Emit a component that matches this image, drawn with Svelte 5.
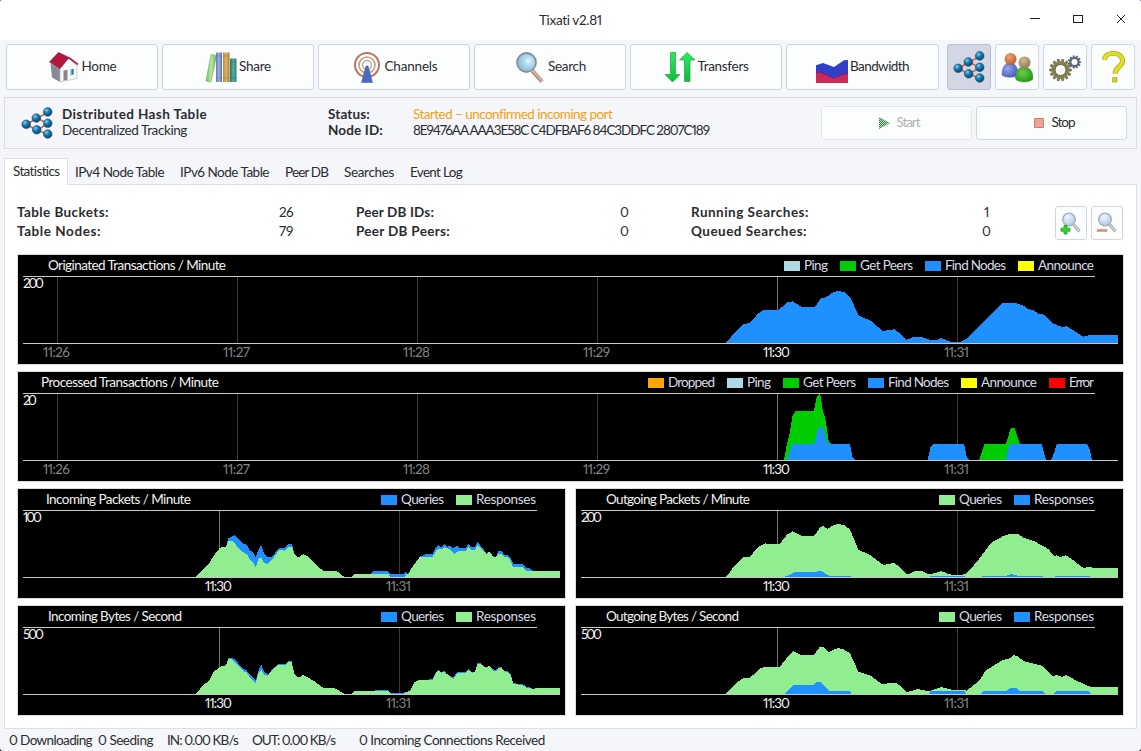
<script>
  // Spreads the letters of a label over a given width.
  function fit(node, width) {
    const natural = node.getBoundingClientRect().width;
    node.style.letterSpacing = (width - natural) / node.textContent.length + 'px';
    node.style.width = width + 'px';
  }

  const tools = [
    { icon: 'home', label: 'Home', w: 35 },
    { icon: 'share', label: 'Share', w: 32 },
    { icon: 'channels', label: 'Channels', w: 53 },
    { icon: 'search', label: 'Search', w: 38 },
    { icon: 'transfers', label: 'Transfers', w: 51 },
    { icon: 'bandwidth', label: 'Bandwidth', w: 59 }
  ];
  const smallTools = ['dht', 'users', 'gears', 'help'];
  const tabs = [['Statistics', 47], ['IPv4 Node Table', 89], ['IPv6 Node Table', 89], ['Peer DB', 43], ['Searches', 50], ['Event Log', 52]];
  const stats = [
    [['Table Buckets:', 92, '26', 14], ['Table Nodes:', 84, '79', 14]],
    [['Peer DB IDs:', 78, '0', 8], ['Peer DB Peers:', 94, '0', 8]],
    [['Running Searches:', 118, '1', 6], ['Queued Searches:', 116, '0', 8]]
  ];
  const status = [['0 Downloading', 83], ['0 Seeding', 55], ['IN: 0.00 KB/s', 71], ['OUT: 0.00 KB/s', 83], ['0 Incoming Connections Received', 186]];

  const BLUE = '#1e90ff', GREEN = '#00cd00', PALE = '#90ee90', LIGHT = '#add8e6', YELLOW = '#ffff00', ORANGE = '#ffa500', RED = '#ff0000';
  const queries = (a, b) => [['Queries', a, 363, 43], ['Responses', b, 438, 60]];

  // Series are flat x,y lists at three units per pixel; dx, dy move them into the chart.
  const charts = [
    {
      title: 'Originated Transactions / Minute', tx: 30, tw: 178, max: '200', mw: 21, width: 1105,
      legend: [['Ping', LIGHT, 766, 24], ['Get Peers', GREEN, 822, 53], ['Find Nodes', BLUE, 907, 61], ['Announce', YELLOW, 1000, 56]],
      ticks: [['11:26', 39], ['11:27', 219], ['11:28', 399], ['11:29', 579], ['11:30', 759], ['11:31', 939]],
      dx: 2046, dy: -195,
      series: [[BLUE, [77,458,85,452,100,432,130,402,150,399,175,370,192,359,235,359,245,352,260,338,278,334,303,350,345,350,363,324,378,322,400,306,415,303,435,307,452,323,475,376,513,393,548,423,583,418,597,428,618,450,640,441,665,441,690,450,710,450,722,444,740,451,755,456,780,456,800,446,830,418,908,340,945,339,973,348,985,358,1000,360,1015,371,1033,374,1058,400,1090,412,1097,407,1115,418,1150,440,1170,435,1254,435]]]
    },
    {
      title: 'Processed Transactions / Minute', tx: 23, tw: 178, max: '20', mw: 14, width: 1105,
      legend: [['Dropped', ORANGE, 630, 47], ['Ping', LIGHT, 709, 24], ['Get Peers', GREEN, 765, 53], ['Find Nodes', BLUE, 850, 61], ['Announce', YELLOW, 943, 56], ['Error', RED, 1031, 25]],
      ticks: [['11:26', 39], ['11:27', 219], ['11:28', 399], ['11:29', 579], ['11:30', 759], ['11:31', 939]],
      dx: 1806, dy: -21,
      series: [
        [GREEN, [492,285,500,240,508,210,517,155,526,138,582,138,590,98,600,83,608,135,618,170,625,225,633,236,650,285,1077,285,1093,237,1158,237,1172,190,1183,188,1200,237,1210,285]],
        [BLUE, [502,285,515,238,582,237,592,195,600,185,610,187,618,218,625,237,690,237,697,275,705,285,923,285,932,245,940,237,1032,237,1040,275,1047,285,1158,285,1164,250,1172,237,1265,237,1275,275,1280,285,1293,285,1302,265,1310,237,1400,237,1410,255,1416,285]]
      ]
    },
    {
      title: 'Incoming Packets / Minute', tx: 28, tw: 145, max: '100', mw: 19, width: 547,
      legend: queries(BLUE, PALE), ticks: [['11:30', 201], ['11:31', 381]], dx: -54, dy: -27,
      series: [
        [BLUE, [678,200,685,175,705,165,715,177,730,191,738,192,750,211,758,215,767,231,777,205,783,195,793,222,803,231,815,231,838,203,855,204,865,193,877,192,880,222,900,240,910,291,1110,291,1115,278,1122,273,1163,273,1172,282,1210,282,1217,276,1222,282,1235,270,1260,230,1278,222,1298,222,1308,202,1315,196,1323,201,1333,192,1343,200,1352,197,1360,206,1370,196,1380,204,1397,203,1405,192,1415,202,1425,202,1433,186,1442,198,1455,214,1460,222,1488,231,1495,213,1505,213,1512,224,1522,224,1532,236,1540,252,1568,252,1580,263,1590,265,1600,273]],
        [PALE, [588,291,600,278,630,246,640,228,660,203,678,200,685,184,695,182,705,191,715,205,735,221,742,224,750,240,758,245,767,261,775,238,783,232,793,250,805,251,815,240,838,210,855,212,865,202,877,202,883,222,893,231,900,230,910,222,925,230,955,262,972,273,1010,273,1033,291,1055,291,1063,282,1165,282,1172,291,1213,291,1220,282,1226,281,1235,263,1260,230,1298,230,1310,210,1318,206,1325,208,1333,202,1350,208,1363,221,1378,212,1397,212,1405,202,1415,211,1425,211,1433,195,1448,211,1460,221,1468,214,1480,231,1488,231,1495,222,1505,223,1515,232,1525,232,1530,240,1540,262,1568,261,1580,273,1680,273]]
      ]
    },
    {
      title: 'Outgoing Packets / Minute', tx: 30, tw: 144, max: '200', mw: 21, width: 547,
      legend: queries(PALE, BLUE), ticks: [['11:30', 201], ['11:31', 381]], dx: 342, dy: -27,
      series: [
        [PALE, [105,291,112,287,130,262,160,232,180,230,205,200,225,190,232,192,270,191,290,165,308,154,333,167,373,167,390,143,400,138,413,147,430,135,445,132,465,136,480,149,505,209,540,225,580,255,612,249,628,260,650,282,660,281,675,273,695,273,715,282,735,280,753,273,770,280,790,286,810,286,830,280,860,246,905,187,938,169,955,163,985,162,1000,173,1035,185,1075,207,1093,229,1100,226,1110,231,1128,226,1145,237,1180,264,1198,260,1210,264,1284,264]],
        [BLUE, [285,290,315,276,375,276,385,273,393,273,418,287,483,288,484,292,719,292,720,288,825,288,826,292,875,292,876,288,948,288,965,282,985,288,1058,288,1059,292,1095,292,1096,288,1200,288,1201,292]]
      ]
    },
    {
      title: 'Incoming Bytes / Second', tx: 30, tw: 134, max: '500', mw: 21, width: 547,
      legend: queries(BLUE, PALE), ticks: [['11:30', 201], ['11:31', 381]], dx: -54, dy: -378,
      series: [
        [BLUE, [683,556,685,534,697,534,706,539,720,556,730,568,738,569,750,585,758,590,767,602,777,567,784,555,793,577,805,583,815,570,835,552,857,551,866,544,875,542,880,575,883,590,890,642,1122,642,1125,630,1163,630,1172,639,1210,639,1215,633,1222,640,1278,600,1298,597,1308,577,1316,570,1323,576,1333,573,1345,587,1355,590,1362,590,1370,577,1397,575,1405,566,1415,576,1425,576,1433,548,1442,550,1455,562,1468,558,1485,572,1497,562,1505,562,1512,573,1522,572,1532,583,1540,610,1568,612,1580,621,1590,622,1600,629]],
        [PALE, [588,642,610,615,628,602,640,577,660,560,678,556,685,538,697,538,710,554,732,575,740,577,750,593,767,610,775,580,784,570,793,585,803,587,815,572,833,556,857,554,866,546,875,545,883,583,893,592,900,591,910,585,920,590,945,605,970,624,1005,625,1033,642,1055,642,1065,633,1165,633,1172,641,1210,641,1230,632,1242,608,1257,600,1298,600,1310,575,1318,572,1325,578,1333,575,1350,590,1360,597,1370,581,1397,578,1405,570,1418,578,1425,576,1433,550,1442,552,1460,565,1468,556,1480,572,1490,572,1497,563,1505,565,1515,575,1523,575,1532,587,1540,612,1568,615,1580,623,1600,627,1610,624,1680,624]]
      ]
    },
    {
      title: 'Outgoing Bytes / Second', tx: 30, tw: 133, max: '500', mw: 21, width: 547,
      legend: queries(PALE, BLUE), ticks: [['11:30', 201], ['11:31', 381]], dx: 342, dy: -378,
      series: [
        [PALE, [108,642,140,608,160,594,180,593,210,566,228,559,232,561,270,560,290,534,310,514,333,525,372,525,388,502,400,502,415,516,443,504,460,508,480,520,505,575,540,586,575,612,615,608,628,615,650,636,685,627,715,634,753,621,790,630,825,630,830,632,870,600,885,573,938,540,960,535,970,525,982,528,1000,543,1055,557,1088,590,1100,584,1115,591,1128,585,1160,602,1195,618,1205,621,1284,621]],
        [BLUE, [283,642,310,615,372,615,380,606,390,606,418,633,480,634,485,642,717,642,722,633,823,633,828,642,873,642,880,633,948,633,962,624,980,624,988,633,1058,633,1065,642,1092,642,1098,633,1197,633,1203,642]]
      ]
    }
  ];

  // One-pixel columns interpolated between samples, closed on the baseline.
  function area(pts, dx, dy) {
    const p = [];
    for (let i = 0; i < pts.length; i += 2) p.push([(pts[i] + dx) / 3, (pts[i + 1] + dy) / 3]);
    const x0 = Math.round(p[0][0]), x1 = Math.round(p[p.length - 1][0]);
    let d = `M${x0} 88`, k = 0;
    for (let x = x0; x < x1; x++) {
      const c = x + 0.5;
      while (k < p.length - 2 && p[k + 1][0] < c) k++;
      const t = Math.max(0, Math.min(1, (c - p[k][0]) / (p[k + 1][0] - p[k][0])));
      d += `V${Math.min(88, Math.round(p[k][1] + t * (p[k + 1][1] - p[k][1])))}h1`;
    }
    return d + 'V88Z';
  }

  function gear(cx, cy, r, n) {
    let d = '';
    for (let i = 0; i < n; i++) {
      [[-0.36, r * 0.76], [-0.2, r], [0.2, r], [0.36, r * 0.76]].forEach(([o, q], j) => {
        const a = ((i + o) / n) * Math.PI * 2;
        d += `${i || j ? 'L' : 'M'}${(cx + q * Math.cos(a)).toFixed(2)} ${(cy + q * Math.sin(a)).toFixed(2)}`;
      });
    }
    return d + 'Z';
  }
  const nodes = [[5.2, 17.3], [15.3, 11], [26.7, 4.9], [26.7, 16.3], [15.7, 22.8], [26.7, 27]];
</script>

<svelte:head><title>Tixati v2.81</title></svelte:head>

{#snippet icon(name)}
  <svg class="ico" width="32" height="32" viewBox="0 0 32 32">
    {#if name === 'home'}
      <path d="M2.500 12.500 12 17.500V31l-8-4.500z" fill="#858c96" />
      <path d="M12 17 21 7l8 8v12.500L12 31z" fill="#f8f8fa" stroke="#b4b7bd" stroke-width=".6" />
      <path d="M1.500 11 10.500 1.500 21 6.500 12 17.500z" fill="#b01840" stroke="#8c1435" stroke-width=".7" />
      <path d="m20.500 6.500 9.500 7" stroke="#ad2449" stroke-width="1.700" />
      <path d="m15.500 19.500 4-.8v10l-4 1z" fill="#8d8587" />
      <path d="m22.500 18.500 3.200-.7v5.700l-3.200.7z" fill="#287fa5" /><path d="M23 18.400v5.700" stroke="#b6dcec" />
    {:else if name === 'share'}
      <path d="m6 3.500 5.500 1L6 31l-5-1z" fill="url(#bookG)" stroke="#68a95a" stroke-width=".6" />
      <path d="M11 1.500h6V31h-6z" fill="url(#bookB)" /><path d="M11 5h6M11 27h6" stroke="#5670b2" stroke-opacity=".5" />
      <path d="M18 1.500h6.500V31H18z" fill="url(#bookO)" /><path d="M18 5h6M18 27h6" stroke="#9d7220" stroke-opacity=".5" />
      <path d="M25 7.500h6.500V31H25z" fill="url(#bookT)" /><path d="M25 11h6M25 27h6" stroke="#1d776d" stroke-opacity=".5" />
    {:else if name === 'channels'}
      <g fill="none"><circle cx="16" cy="14" r="12" stroke="#bd755b" stroke-width="2" /><circle cx="16" cy="14" r="8" stroke="#bca289" stroke-width="1.600" /><circle cx="16" cy="14" r="4.500" stroke="#b9b091" stroke-width="1.500" /></g>
      <path d="M15 15h2l4.500 16.500h-11z" fill="#476bc5" stroke="#3853a2" stroke-width=".5" />
    {:else if name === 'search'}
      <path d="m18.500 20 9.500 10.500" stroke="#968078" stroke-width="4" /><path d="m18.500 19.500 9.500 10.500" stroke="#dbae98" stroke-width="2.400" />
      <circle cx="12.500" cy="11.500" r="9.500" fill="url(#lens)" stroke="#899198" stroke-width="1.800" />
    {:else if name === 'transfers'}
      <path d="M6.500 1.500h5v22H16l-7.500 7.500L1 23.500h5.500z" fill="url(#arrow)" stroke="#3c9f52" stroke-width=".8" />
      <path d="M20.500 30.500h5.500V9h5l-8-7.500L15.500 9h5z" fill="url(#arrow)" stroke="#3c9f52" stroke-width=".8" />
    {:else if name === 'bandwidth'}
      <path d="m0 14.300 7-2.300 11 4L28 9.300l4-.3v18H0z" fill="#303fc5" /><path d="m0 22 4-.7 14 6L28 23h4v9H0z" fill="#cc2958" /><path d="m0 22 4-.7 14 6L28 23h4" stroke="#822078" fill="none" />
    {:else if name === 'dht'}
      <path d="m5 17.500 21.500-12M5 17.500 16 23l11 4.500M15.500 11 27 16.500 16 23" stroke="#dc6341" stroke-width="1.500" fill="none" />
      {#each nodes as [x, y]}<circle cx={x} cy={y} r="4.300" fill="url(#ball)" stroke="#20465e" stroke-width=".6" />{/each}
    {:else if name === 'users'}
      <path d="M1 24c0-8 3-12 8-12s8 4 8 12c-3 3-13 3-16 0z" fill="url(#bodyB)" stroke="#4b58a5" stroke-width=".5" /><circle cx="9.500" cy="8" r="6" fill="url(#headO)" />
      <path d="M14.500 28c0-8 3-12 8.500-12s9 4 9 12c-4 4-14 4-17.500 0z" fill="url(#bodyG)" stroke="#328923" stroke-width=".5" /><circle cx="23.500" cy="11.500" r="6" fill="url(#headT)" />
    {:else if name === 'gears'}
      <path d={gear(11.500, 19, 11, 14)} fill="#858150" stroke="#5d5b3d" stroke-width=".5" /><circle cx="11.500" cy="19" r="5.500" fill="#fbfdfd" stroke="#656243" />
      <path d={gear(25.500, 11, 6.800, 11)} fill="#596678" /><circle cx="25.500" cy="11" r="3" fill="#fbfdfd" />
    {:else if name === 'help'}
      <path d="M7.500 9c.5-9 18-9 18 1 0 6-7 5.500-7.500 12.500" fill="none" stroke="#a4a41c" stroke-width="5" /><path d="M7.500 9c.5-9 18-9 18 1 0 6-7 5.500-7.500 12.500" fill="none" stroke="#dfe021" stroke-width="3.600" />
      <path d="M15.500 26.500h4.500V31h-4.500z" fill="#d3d51c" stroke="#a4a41c" stroke-width=".7" />
    {/if}
  </svg>
{/snippet}

{#snippet zoomIcon(plus)}
  <svg width="24" height="24" viewBox="0 0 24 24">
    <path d="m14.500 13.500 6 7" stroke="#9b9b9e" stroke-width="3" /><path d="m14.500 13.500 6 7" stroke="#d7d8da" stroke-width="1.500" />
    <circle cx="10" cy="8.500" r="6.300" fill="url(#lensPale)" stroke="#a7abb0" stroke-width="1.300" />
    {#if plus}<path d="M5 14.500h3v2.700h3v3H8V23H5v-2.800H2v-3h3z" fill="#35d62d" stroke="#249b25" stroke-width=".8" />
    {:else}<path d="M2 18.500h10v2H2z" fill="#dc8c7d" stroke="#c7897f" stroke-width=".5" />{/if}
  </svg>
{/snippet}

{#snippet chart(c)}
  <svg class="chart" width={c.width} height="109" viewBox="0 0 {c.width} 109">
    <g shape-rendering="crispEdges">
      {#each c.ticks as [label, x]}<path d="M{x}.5 22V88" stroke={label === '11:30' ? '#777' : '#3b3b3b'} />{/each}
      {#each c.series as [fill, pts]}<path d={area(pts, c.dx, c.dy)} {fill} />{/each}
      <path d="M5 21.500H{c.width - 28}M5 88.500H{c.width - 5}" stroke="#c8c8c8" />
      {#each c.legend as [, fill, x]}<rect {x} y="6" width="16" height="10" {fill} />{/each}
    </g>
    <text x={c.tx} y="15" textLength={c.tw}>{c.title}</text>
    <text x="5" y="33" textLength={c.mw}>{c.max}</text>
    {#each c.legend as [label, , x, w]}<text class="key" x={x + 20} y="15" textLength={w}>{label}</text>{/each}
    {#each c.ticks as [label, x]}<text class:dim={label !== '11:30'} x={label === '11:31' ? x - 13 : x - 14} y="102" textLength={label === '11:31' ? 25 : 27}>{label}</text>{/each}
  </svg>
{/snippet}

<svg class="defs" width="0" height="0">
  <defs>
    <radialGradient id="ball" cx=".35" cy=".3" r=".75"><stop offset="0" stop-color="#83d4f3" /><stop offset=".4" stop-color="#1681b9" /><stop offset="1" stop-color="#073e63" /></radialGradient>
    <radialGradient id="lens" cx=".6" cy=".42" r=".6"><stop offset="0" stop-color="#e5f7ff" /><stop offset=".35" stop-color="#b5dcf1" /><stop offset="1" stop-color="#86b9d8" /></radialGradient>
    <radialGradient id="lensPale" cx=".4" cy=".3" r=".75"><stop offset="0" stop-color="#edf6ff" /><stop offset="1" stop-color="#a8c6eb" /></radialGradient>
    <radialGradient id="headO" cx=".4" cy=".3" r=".7"><stop offset="0" stop-color="#eba376" /><stop offset="1" stop-color="#b96031" /></radialGradient>
    <radialGradient id="headT" cx=".4" cy=".3" r=".7"><stop offset="0" stop-color="#cebb91" /><stop offset="1" stop-color="#927d57" /></radialGradient>
    <radialGradient id="bodyB" cx=".35" cy=".4" r=".7"><stop offset="0" stop-color="#98a6ef" /><stop offset="1" stop-color="#4258bf" /></radialGradient>
    <radialGradient id="bodyG" cx=".4" cy=".4" r=".7"><stop offset="0" stop-color="#6ccc4d" /><stop offset="1" stop-color="#1e9710" /></radialGradient>
    <linearGradient id="arrow" x2="0" y2="1"><stop stop-color="#29ed64" /><stop offset="1" stop-color="#0bbd36" /></linearGradient>
    <linearGradient id="bookG"><stop stop-color="#77bf63" /><stop offset=".5" stop-color="#b5eaa2" /><stop offset="1" stop-color="#69ad57" /></linearGradient>
    <linearGradient id="bookB"><stop stop-color="#6178b8" /><stop offset=".5" stop-color="#a3b2df" /><stop offset="1" stop-color="#536ba9" /></linearGradient>
    <linearGradient id="bookO"><stop stop-color="#b48632" /><stop offset=".5" stop-color="#dfb86c" /><stop offset="1" stop-color="#a87820" /></linearGradient>
    <linearGradient id="bookT"><stop stop-color="#216e67" /><stop offset=".5" stop-color="#63aaa0" /><stop offset="1" stop-color="#287d72" /></linearGradient>
    <pattern id="check" width="2" height="2" patternUnits="userSpaceOnUse"><rect width="2" height="2" fill="#c9dfca" /><path d="M0 0h1v1H0zM1 1h1v1H1z" fill="#32823a" /></pattern>
  </defs>
</svg>

<div class="window">
  <header>
    <span class="t" use:fit={63}>Tixati v2.81</span>
    <svg class="controls" width="100" height="12" viewBox="0 0 100 12" fill="none" stroke="#202020">
      <path d="M2 4.500h10" shape-rendering="crispEdges" /><path d="M45.500 1.500h9v7h-9z" shape-rendering="crispEdges" /><path d="m89 1 8 8m0-8-8 8" />
    </svg>
  </header>

  <nav>
    {#each tools as t}
      <button class="tool">{@render icon(t.icon)}<span class="t" use:fit={t.w}>{t.label}</span></button>
    {/each}
    <div class="small-tools">
      {#each smallTools as s}<button class:active={s === 'dht'}>{@render icon(s)}</button>{/each}
    </div>
  </nav>

  <section class="info">
    {@render icon('dht')}
    <div class="lines name"><b class="t" use:fit={145}>Distributed Hash Table</b><span class="t" use:fit={125}>Decentralized Tracking</span></div>
    <div class="lines keys"><b class="t" use:fit={42}>Status:</b><b class="t" use:fit={55}>Node ID:</b></div>
    <div class="lines values"><span class="t warn" use:fit={199}>Started – unconfirmed incoming port</span><span class="t" use:fit={296}>8E9476AA AAA3E58C C4DFBAF6 84C3DDFC 2807C189</span></div>
    <div class="actions">
      <button class="off"><svg width="16" height="16"><path d="M3 2v12l11-6z" fill="url(#check)" /></svg><span class="t" use:fit={23}>Start</span></button>
      <button><svg width="16" height="16"><path d="M3.500 3.500h9v9h-9z" fill="#eda496" stroke="#c77d72" /></svg><span class="t" use:fit={23}>Stop</span></button>
    </div>
  </section>

  <div class="tabs">
    {#each tabs as [label, w], i}<div class="tab" class:current={i === 0}><span class="t" use:fit={w}>{label}</span></div>{/each}
  </div>

  <main>
    <div class="stats">
      {#each stats as group}
        <div class="group">
          {#each group as [label, w, value, vw]}<div class="row"><b class="t" use:fit={w}>{label}</b><span class="t" use:fit={vw}>{value}</span></div>{/each}
        </div>
      {/each}
      <div class="zooms"><button>{@render zoomIcon(true)}</button><button>{@render zoomIcon(false)}</button></div>
    </div>
    <div class="charts">
      {#each charts as c}<div class="frame" class:wide={c.width > 1000}>{@render chart(c)}</div>{/each}
    </div>
  </main>

  <footer>{#each status as [label, w]}<span class="t" use:fit={w}>{label}</span>{/each}</footer>
</div>

<style>
  :global(body) { background: linear-gradient(#5e6592 50%, #101010 50%); overflow: hidden; }
  .defs { position: absolute; }
  .window { width: 1141px; height: 751px; box-sizing: border-box; display: flex; flex-direction: column; overflow: hidden; border-radius: 3px; background: #f4f6f9; color: #2b2c30; font: 13.5px/16px Lato, "Open Sans", sans-serif; font-variant-numeric: proportional-nums; }
  .t { display: inline-block; white-space: nowrap; flex: none; }
  b { font-weight: 700; }
  svg { display: block; flex: none; }
  header { height: 40px; background: #fff; display: grid; grid-template-columns: 1fr auto 1fr; align-items: center; }
  header .t { grid-column: 2; }
  .controls { justify-self: end; margin-right: 13px; }
  button { font: inherit; font-variant-numeric: inherit; color: inherit; margin: 0; padding: 0; box-sizing: border-box; border: 1px solid #cdd4e6; border-radius: 3px; background: #fcfefe; display: flex; align-items: center; justify-content: center; }
  button .t { padding-bottom: 2px; }
  nav { display: flex; gap: 4px; padding: 4px 6px 0; }
  .tool { width: 152px; height: 46px; gap: 2px; }
  .tool:nth-child(6) { width: 153px; }
  .small-tools { display: flex; gap: 4px; margin-left: 4px; }
  .small-tools button { width: 44px; height: 46px; }
  .small-tools .active { background: #d3d7e4; border-color: #b4bdd3; }
  .info { height: 52px; box-sizing: border-box; margin: 7px 4px 0; border: 1px solid #d9dce2; display: flex; align-items: center; padding: 0 9px 0 16px; }
  .lines { display: flex; flex-direction: column; align-items: flex-start; padding-bottom: 2px; }
  .name { margin-left: 9px; width: 266px; }
  .keys { width: 85px; }
  .warn { color: #f5a110; }
  .actions { margin-left: auto; display: flex; gap: 4px; }
  .actions button { width: 151px; height: 34px; gap: 5px; padding-left: 2px; }
  .actions .off { border-color: #e2e6ef; color: #b2b3b7; }
  .tabs { height: 27px; margin: 9px 4px -1px; display: flex; flex: none; position: relative; z-index: 1; }
  .tab { box-sizing: border-box; padding: 6px 8px 0; }
  .tab:nth-child(2) { padding-left: 7px; }
  .current { background: #fff; border: 1px solid #dbe0e9; border-bottom: 0; width: 64px; padding: 4px 8px 0; }
  main { flex: 1; box-sizing: border-box; margin: 0 4px; background: #fff; border: 1px solid #dbe0e9; padding: 19px 12px 0; }
  .stats { display: flex; height: 50px; }
  .group { width: 276px; margin-right: 63px; }
  .group:nth-child(2) { width: 272px; margin-right: 63px; }
  .group:nth-child(3) { width: 299px; margin-right: 65px; }
  .row { display: flex; justify-content: space-between; height: 19px; }
  .zooms { display: flex; gap: 4px; margin-top: 2px; }
  .zooms button { width: 32px; height: 34px; }
  .charts { display: grid; grid-template-columns: 549px 549px; column-gap: 9px; row-gap: 6px; }
  .frame { border: 1px solid #ddd; background: #000; }
  .wide { grid-column: span 2; }
  .chart text { fill: #f2f2f2; font: 13.5px Lato, "Open Sans", sans-serif; font-variant-numeric: proportional-nums; }
  .chart .key { fill: #d9dbe5; }
  .chart .dim { fill: #858585; }
  footer { height: 22px; flex: none; display: flex; padding: 3px 9px 0; box-sizing: border-box; gap: 14px; }
  footer .t:nth-child(2) { margin-left: -8px; }
  footer .t:nth-child(5) { margin-left: 10px; }
</style>
